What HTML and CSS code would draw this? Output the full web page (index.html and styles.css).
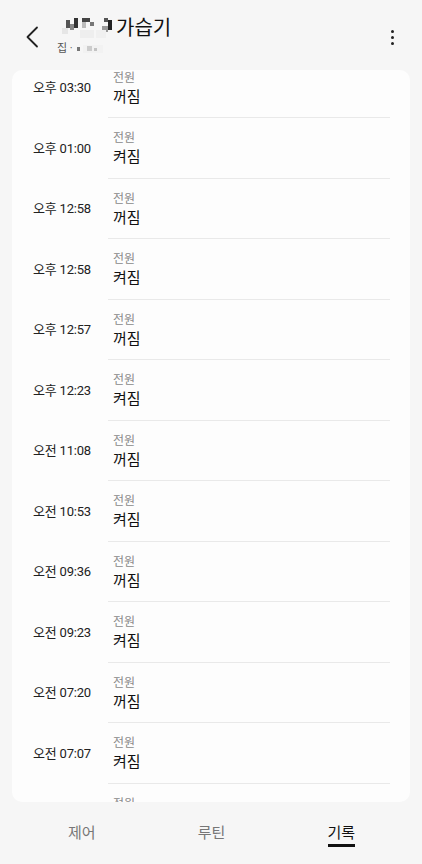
FILE: index.html
```html
<!DOCTYPE html>
<html lang="ko">
<head>
    <meta charset="utf-8">
    <title>가습기 기록</title>
    <link rel="stylesheet" href="styles.css">
</head>
<body>
    <div id="app">
        <div class="header">
            <button class="back" aria-label="뒤로">
                <svg width="14" height="22" viewBox="0 0 14 22"><path d="M12 1.5 L2.5 11 L12 20.5" fill="none" stroke="#222" stroke-width="1.8" stroke-linecap="round" stroke-linejoin="round"/></svg>
            </button>
            <div class="title-box">
                <div class="title">
                    <svg class="blur-name" width="56" height="24" viewBox="0 0 56 24">
                        <rect x="6" y="4" width="4" height="8" fill="#555"/>
                        <rect x="10" y="8" width="4" height="6" fill="#888"/>
                        <rect x="14" y="2" width="4" height="10" fill="#333"/>
                        <rect x="2" y="12" width="6" height="6" fill="#e6e6e6"/>
                        <rect x="22" y="2" width="8" height="4" fill="#444"/>
                        <rect x="22" y="6" width="4" height="6" fill="#bbb"/>
                        <rect x="30" y="6" width="4" height="4" fill="#777"/>
                        <rect x="20" y="14" width="14" height="8" fill="#eee"/>
                        <rect x="44" y="2" width="4" height="4" fill="#555"/>
                        <rect x="48" y="4" width="4" height="10" fill="#222"/>
                        <rect x="42" y="10" width="6" height="6" fill="#999"/>
                        <rect x="36" y="14" width="10" height="8" fill="#f0f0f0"/>
                    </svg>가습기
                </div>
                <div class="sub">집 · <svg width="30" height="10" viewBox="0 0 30 10"><rect x="2" y="3" width="3" height="4" fill="#777"/><rect x="12" y="2" width="5" height="5" fill="#aaa"/><rect x="19" y="4" width="3" height="3" fill="#999"/><rect x="8" y="1" width="20" height="8" fill="#eee" opacity="0.5"/></svg></div>
            </div>
            <button class="more" aria-label="더보기">
                <span></span><span></span><span></span>
            </button>
        </div>

        <div class="card">
            <div id="log-list"></div>
        </div>

        <div class="tabs">
            <div class="tab">제어</div>
            <div class="tab">루틴</div>
            <div class="tab active">기록</div>
        </div>
    </div>

    <script>
        const logs = [
            ["오후 03:30", "꺼짐"],
            ["오후 01:00", "켜짐"],
            ["오후 12:58", "꺼짐"],
            ["오후 12:58", "켜짐"],
            ["오후 12:57", "꺼짐"],
            ["오후 12:23", "켜짐"],
            ["오전 11:08", "꺼짐"],
            ["오전 10:53", "켜짐"],
            ["오전 09:36", "꺼짐"],
            ["오전 09:23", "켜짐"],
            ["오전 07:20", "꺼짐"],
            ["오전 07:07", "켜짐"],
            ["오전 06:50", "꺼짐"]
        ];

        const list = document.getElementById('log-list');
        logs.forEach(function (item) {
            const row = document.createElement('div');
            row.className = 'log';
            row.innerHTML = `
                <div class="time">${item[0]}</div>
                <div class="info">
                    <div class="label">전원</div>
                    <div class="value">${item[1]}</div>
                </div>
            `;
            list.appendChild(row);
        });
    </script>
</body>
</html>
```

FILE: styles.css
```css
body {
    margin: 0;
    background-color: #f6f6f6;
    font-family: Roboto, "Noto Sans CJK KR", sans-serif;
    color: #111;
}
#app {
    height: 864px;
    display: flex;
    flex-direction: column;
}
.header {
    height: 70px;
    display: flex;
    align-items: flex-start;
    box-sizing: border-box;
    padding: 0 20px 0 19px;
}
.header button {
    background: none;
    border: none;
    padding: 0;
    cursor: pointer;
}
.back {
    width: 26px;
    height: 26px;
    margin-top: 24px;
    display: flex;
    align-items: center;
    justify-content: center;
}
.title-box {
    flex: 1;
    margin-left: 12px;
    padding-top: 14px;
}
.title {
    display: flex;
    align-items: center;
    font-size: 20px;
    line-height: 28px;
    color: #111;
}
.blur-name {
    margin-left: 3px;
}
.sub {
    display: flex;
    align-items: center;
    font-size: 11px;
    color: #555;
    line-height: 14px;
    margin-top: 0;
}
.sub svg {
    margin-left: 2px;
}
.more {
    width: 20px;
    height: 20px;
    margin-top: 27px;
    display: flex;
    flex-direction: column;
    align-items: center;
    justify-content: center;
    gap: 3px;
}
.more span {
    width: 3px;
    height: 3px;
    border-radius: 50%;
    background-color: #222;
}
.card {
    margin: 0 12px;
    height: 732px;
    background-color: #fdfdfd;
    border-radius: 10px;
    overflow: hidden;
}
#log-list {
    margin-top: -12.5px;
}
.log {
    height: 60.5px;
    display: flex;
    box-sizing: border-box;
}
.time {
    width: 96px;
    display: flex;
    align-items: center;
    padding: 0 0 2px 21px;
    box-sizing: border-box;
    font-size: 13px;
    color: #222;
    letter-spacing: -0.2px;
}
.info {
    flex: 1;
    margin-right: 20px;
    padding: 12px 0 0 5px;
    border-bottom: 1px solid #e9e9e9;
}
.label {
    font-size: 12px;
    line-height: 16px;
    color: #8a8a8a;
}
.value {
    font-size: 15px;
    line-height: 22px;
    color: #111;
}
.tabs {
    flex: 1;
    display: flex;
    padding: 0 16px 0 17px;
}
.tab {
    flex: 1;
    text-align: center;
    font-size: 15px;
    color: #777;
    padding-top: 19px;
}
.tab.active {
    color: #111;
}
.tab.active::after {
    content: "";
    display: block;
    width: 27px;
    height: 3px;
    margin: 2px auto 0;
    background-color: #111;
}
```
